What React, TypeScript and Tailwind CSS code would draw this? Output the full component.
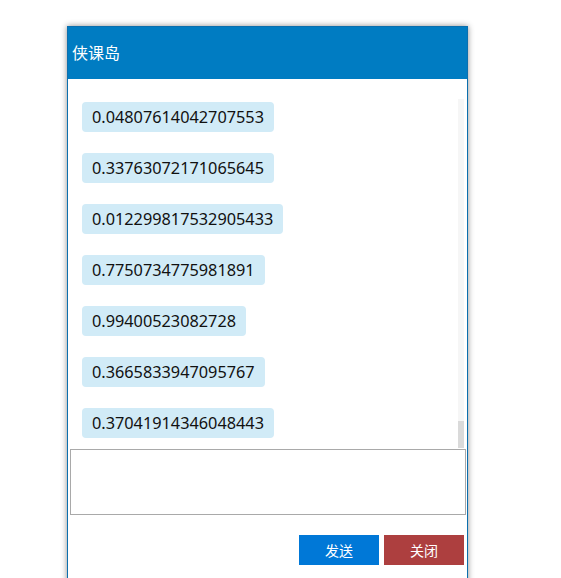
import React from "react";

const messages = [
  "0.04807614042707553",
  "0.33763072171065645",
  "0.012299817532905433",
  "0.7750734775981891",
  "0.99400523082728",
  "0.3665833947095767",
  "0.37041914346048443",
];

export default function App() {
  return (
    <div className="w-[561px] h-[578px] overflow-hidden bg-white font-['Noto_Sans','Noto_Sans_CJK_SC',sans-serif]">
      <div className="ml-[67px] mt-[26px] w-[401px] border border-[#0b6fae] bg-white shadow-[0_0_6px_rgba(0,0,0,0.45)]">
        {/* HEADER */}
        <div className="h-[52px] bg-[#007cc2] flex items-center pl-[4px] text-[16px] text-white">
          侠课岛
        </div>

        {/* MESSAGES */}
        <div className="h-[370px] flex">
          <div className="flex-1 pt-[23px] pl-[14px] flex flex-col gap-[21px]">
            {messages.map((m, i) => (
              <div key={i}>
                <span className="inline-block h-[30px] leading-[30px] px-[10px] rounded-[4px] bg-[#d1ebf7] text-[16.3px] text-[#111]">
                  {m}
                </span>
              </div>
            ))}
          </div>
          <div className="w-[6px] mt-[20px] mr-[3px] mb-[1px] bg-[#f6f6f6] flex flex-col justify-end">
            <div className="h-[27px] bg-[#dadada]" />
          </div>
        </div>

        {/* INPUT */}
        <textarea className="block ml-[2px] w-[396px] h-[66px] border border-[#a9a9a9] resize-none outline-none" />

        {/* BUTTONS */}
        <div className="flex justify-end gap-[5px] pr-[3px] pt-[20px] pb-[20px]">
          <button className="w-[80px] h-[30px] bg-[#0078d7] text-white text-[14px]">
            发送
          </button>
          <button className="w-[80px] h-[30px] bg-[#ad3f3f] text-white text-[14px]">
            关闭
          </button>
        </div>
      </div>
    </div>
  );
}
